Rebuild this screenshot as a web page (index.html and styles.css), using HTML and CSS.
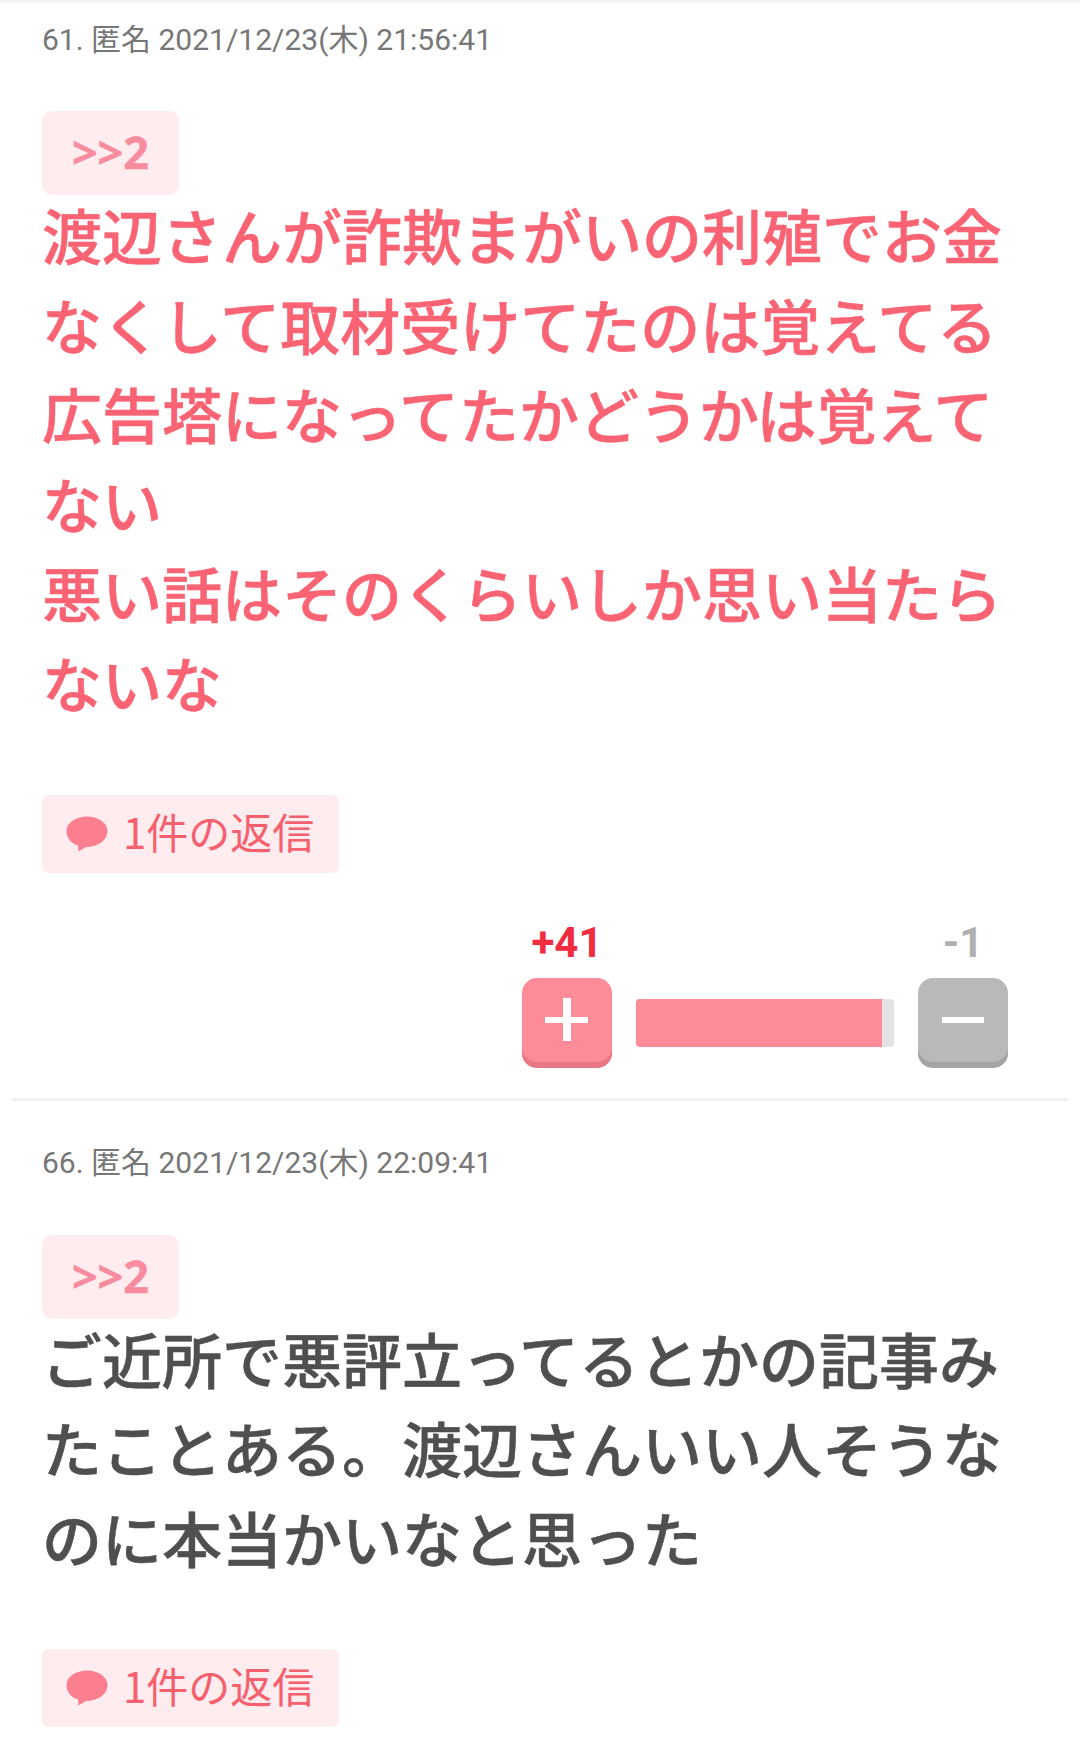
FILE: index.html
```html
<!DOCTYPE html>
<html lang="ja">
<head>
<meta charset="utf-8">
<title>コメント</title>
<link rel="stylesheet" href="styles.css">
</head>
<body>
<section class="comment">
  <div class="meta">61. 匿名 2021/12/23(木) 21:56:41</div>
  <a class="quote">&gt;&gt;2</a>
  <p class="body hot">渡辺さんが詐欺まがいの利殖でお金なくして取材受けてたのは覚えてる<br>広告塔になってたかどうかは覚えてない<br>悪い話はそのくらいしか思い当たらないな</p>
  <a class="reply">
    <svg class="bubble" viewBox="0 0 42 36"><path d="M21 0.500C9.500 0.500 0.500 7 0.500 15C0.500 22 5.500 27.500 12 29.500L12.500 35.500L20 31C32 31 41.500 24 41.500 15C41.500 7 32.500 0.500 21 0.500Z"/></svg>
    <span class="reply-text">1件の返信</span>
  </a>
  <div class="votes">
    <div class="vote-col">
      <span class="count plus-count">+41</span>
      <button class="btn btn-plus"><span class="bar-h"></span><span class="bar-v"></span></button>
    </div>
    <div class="meter"><div class="meter-fill" style="width:95.300%"></div></div>
    <div class="vote-col">
      <span class="count minus-count">-1</span>
      <button class="btn btn-minus"><span class="bar-h"></span></button>
    </div>
  </div>
</section>
<section class="comment">
  <div class="meta">66. 匿名 2021/12/23(木) 22:09:41</div>
  <a class="quote">&gt;&gt;2</a>
  <p class="body">ご近所で悪評立ってるとかの記事みたことある。渡辺さんいい人そうなのに本当かいなと思った</p>
  <a class="reply">
    <svg class="bubble" viewBox="0 0 42 36"><path d="M21 0.500C9.500 0.500 0.500 7 0.500 15C0.500 22 5.500 27.500 12 29.500L12.500 35.500L20 31C32 31 41.500 24 41.500 15C41.500 7 32.500 0.500 21 0.500Z"/></svg>
    <span class="reply-text">1件の返信</span>
  </a>
</section>
</body>
</html>
```
FILE: styles.css
```css
* { box-sizing: border-box; }
html, body { margin: 0; padding: 0; }
body {
  width: 1080px;
  height: 1745px;
  overflow: hidden;
  background: #fff;
  border-top: 3px solid #f4f4f4;
  font-family: "Noto Sans CJK JP", "Noto Sans", Roboto, sans-serif;
}
.comment {
  margin: 0 12px;
  padding: 19px 30px 0;
}
.comment + .comment {
  border-top: 3px solid #f0f0f0;
  margin-top: 30px;
  padding-top: 44px;
}
.meta {
  height: 36px;
  font-family: Roboto, "Noto Sans CJK JP", sans-serif;
  font-size: 30px;
  line-height: 36px;
  color: #777;
}
.quote {
  display: flex;
  align-items: center;
  justify-content: center;
  width: 137px;
  height: 84px;
  margin-top: 53px;
  padding-bottom: 3px;
  border-radius: 10px;
  background: #feecee;
  color: #f78c9f;
  font-family: "Noto Sans", Roboto, sans-serif;
  font-size: 45px;
  font-weight: 700;
  -webkit-text-stroke: 0.4px currentColor;
}
.comment + .comment .quote { margin-top: 54px; }
.body {
  margin: -6px 0 0;
  width: 965px;
  font-size: 60px;
  line-height: 89.600px;
  font-weight: 500;
  -webkit-text-stroke: 0.5px currentColor;
  color: #4f4f4f;
  word-break: break-all;
}
.body.hot { color: #fa6373; }
.reply {
  display: flex;
  align-items: center;
  gap: 15px;
  width: 297px;
  height: 78px;
  margin-top: 68px;
  padding-left: 24px;
  border-radius: 6px;
  background: #feecee;
  color: #f5606f;
  font-size: 42px;
}
.reply-text { padding-bottom: 7px; }
.bubble { width: 42px; height: 36px; fill: #fb7f8e; flex: none; }
.votes {
  display: flex;
  align-items: flex-end;
  justify-content: flex-end;
  gap: 24px;
  height: 90px;
  margin-top: 105px;
  padding-right: 30px;
}
.vote-col { position: relative; width: 90px; height: 90px; }
.count {
  position: absolute;
  left: 0;
  right: 0;
  top: -57px;
  text-align: center;
  font-family: Roboto, sans-serif;
  font-size: 42px;
  line-height: 44px;
  font-weight: 700;
}
.plus-count { color: #f02d40; }
.minus-count { color: #b0b0b0; }
.btn {
  position: relative;
  display: block;
  width: 90px;
  height: 90px;
  padding: 0;
  border: 0;
  border-radius: 15px;
}
.btn-plus { background: #fe8b98; box-shadow: inset 0 -6px 0 #e97887; }
.btn-minus { background: #b9b9b9; box-shadow: inset 0 -6px 0 #a4a4a4; }
.bar-h {
  position: absolute;
  left: 23px;
  top: 39px;
  width: 43px;
  height: 6px;
  background: #fff;
}
.btn-minus .bar-h { left: 24px; width: 42px; }
.bar-v {
  position: absolute;
  left: 41px;
  top: 20px;
  width: 8px;
  height: 43px;
  background: #fff;
}
.meter {
  width: 258px;
  height: 48px;
  margin-bottom: 21px;
  border-radius: 4px;
  background: #e3e3e3;
  overflow: hidden;
}
.meter-fill { height: 100%; background: #fe8b98; }
```
